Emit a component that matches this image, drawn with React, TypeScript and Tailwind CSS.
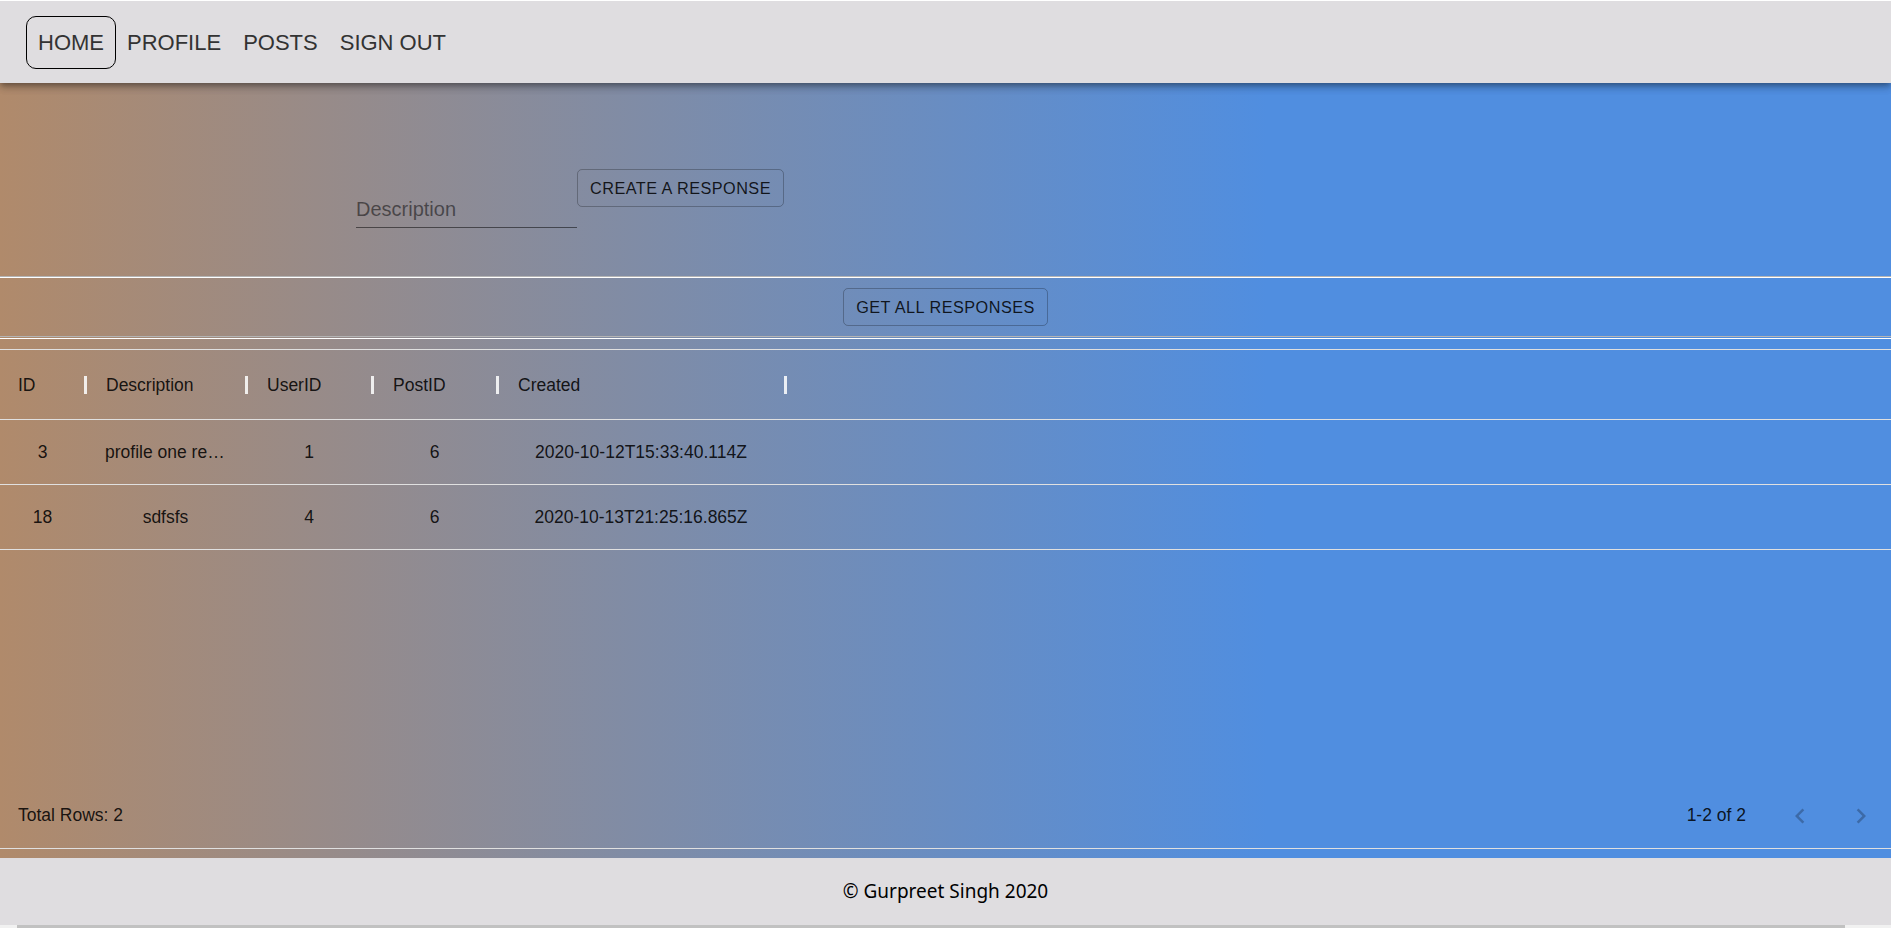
import { ReactNode } from 'react';

const columns = [
  { key: 'id', label: 'ID', width: 85 },
  { key: 'description', label: 'Description', width: 161 },
  { key: 'userId', label: 'UserID', width: 126 },
  { key: 'postId', label: 'PostID', width: 125 },
  { key: 'created', label: 'Created', width: 288 },
];

const rows = [
  { id: 3, description: 'profile one response', userId: 1, postId: 6, created: '2020-10-12T15:33:40.114Z' },
  { id: 18, description: 'sdfsfs', userId: 4, postId: 6, created: '2020-10-13T21:25:16.865Z' },
];

function Hr({ gap }: { gap?: boolean }) {
  return (
    <div
      className={
        gap
          ? 'h-[3px] border-t border-b border-t-[#b4b4b4] border-b-white'
          : 'h-[2px] border-t border-b border-t-[#b4b4b4] border-b-white'
      }
    />
  );
}

function OutlinedButton({ children }: { children: ReactNode }) {
  return (
    <button className="h-[38px] px-[12px] rounded-[5px] border border-black/25 text-[16.25px] tracking-[0.02857em] uppercase text-black/85 leading-none">
      {children}
    </button>
  );
}

function Chevron({ dir }: { dir: 'left' | 'right' }) {
  return (
    <svg viewBox="0 0 24 24" width={30} height={30} fill="currentColor">
      {dir === 'left' ? (
        <path d="M15.41 7.41L14 6l-6 6 6 6 1.41-1.41L10.83 12z" />
      ) : (
        <path d="M10 6L8.59 7.41 13.17 12l-4.58 4.59L10 18l6-6z" />
      )}
    </svg>
  );
}

export default function App() {
  const nav = ['HOME', 'PROFILE', 'POSTS', 'SIGN OUT'];

  return (
    <div className="w-[1891px] h-[928px] overflow-hidden flex flex-col font-['Liberation_Sans',Arial,sans-serif] text-black/[0.87]">
      {/* app bar */}
      <nav className="relative z-10 h-[83px] shrink-0 bg-[#dfdde0] border-t border-white flex items-center pl-[26px] shadow-[0_3px_5px_-1px_rgba(0,0,0,0.25),0_5px_7px_0_rgba(0,0,0,0.16),0_1px_12px_0_rgba(0,0,0,0.12)]">
        {nav.map((item, i) => (
          <a
            key={item}
            className={
              i === 0
                ? 'h-[53px] flex items-center px-[11px] border border-black rounded-[10px] text-[22px] text-[#333]'
                : 'h-[53px] flex items-center px-[10px] border border-transparent text-[22px] text-[#333]'
            }
          >
            {item}
          </a>
        ))}
      </nav>

      <main className="flex-1 flex flex-col bg-[linear-gradient(to_right,#b08a6b,#508ee0_67%)]">
        {/* create form */}
        <section className="h-[193px] flex items-start pt-[86px] pl-[356px]">
          <div className="w-[221px] mt-[20px] h-[39px] flex items-end pb-[3px] border-b border-black/50 text-[20px] text-black/50">
            Description
          </div>
          <OutlinedButton>Create a response</OutlinedButton>
        </section>
        <Hr />

        <section className="h-[58px] flex items-center justify-center">
          <OutlinedButton>Get all responses</OutlinedButton>
        </section>
        <Hr gap />

        {/* data grid */}
        <div className="mt-[10px] h-[500px] flex flex-col border-t border-b border-[#e0e0e0] text-[17.5px]">
          <div className="h-[70px] flex border-b border-[#e0e0e0]">
            {columns.map((c, i) => (
              <div
                key={c.key}
                style={{ width: c.width }}
                className={
                  i === 0
                    ? 'relative flex items-center pt-[2px] pl-[18px]'
                    : 'relative flex items-center pt-[2px] pl-[21px]'
                }
              >
                {c.label}
                <span className="absolute right-[-2px] top-1/2 -translate-y-1/2 w-[3px] h-[18px] bg-white/85" />
              </div>
            ))}
          </div>

          {rows.map((r) => (
            <div key={r.id} className="h-[65px] flex border-b border-[#e0e0e0]">
              {columns.map((c) => (
                <div
                  key={c.key}
                  style={{ width: c.width }}
                  className="flex items-center justify-center px-[20px]"
                >
                  <span className="truncate text-center w-full">
                    {String(r[c.key as keyof typeof r])}
                  </span>
                </div>
              ))}
            </div>
          ))}

          <div className="flex-1" />

          <div className="h-[65px] flex items-center justify-between pl-[18px] pr-[15px]">
            <span>Total Rows: 2</span>
            <div className="flex items-center">
              <span>1-2 of 2</span>
              <div className="ml-[39px] flex items-center gap-[31px] text-black/25">
                <Chevron dir="left" />
                <Chevron dir="right" />
              </div>
            </div>
          </div>
        </div>
        <div className="h-[8px]" />
      </main>

      <footer className="h-[67px] shrink-0 bg-[#dfdde0] flex items-center justify-center text-[19px] text-black font-['Noto_Sans','Open_Sans',sans-serif]">
        © Gurpreet Singh 2020
      </footer>
      <div className="h-[3px] shrink-0 flex bg-[#f1f1f1]">
        <div className="ml-[17px] w-[1828px] bg-[#c1c1c1]" />
      </div>
    </div>
  );
}
